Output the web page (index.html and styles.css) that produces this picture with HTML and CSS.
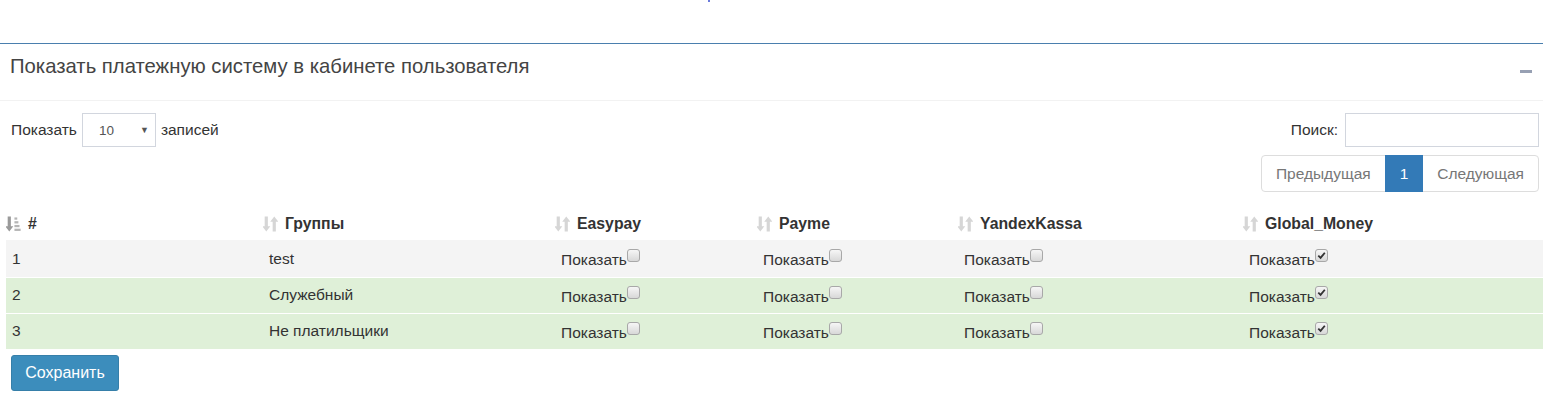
FILE: index.html
```html
<!DOCTYPE html>
<html lang="ru">
<head>
<meta charset="utf-8">
<title>Платежные системы</title>
<link rel="stylesheet" href="styles.css">
</head>
<body>
<div class="top"><span class="dot"></span></div>
<section class="box">
  <div class="box-header">
    <h3 class="box-title">Показать платежную систему в кабинете пользователя</h3>
    <span class="collapse-btn"></span>
  </div>
  <div class="box-body">
    <div class="controls">
      <div class="length">
        <span>Показать</span>
        <span class="select"><span class="select-val">10</span><span class="select-arrow">▼</span></span>
        <span>записей</span>
      </div>
      <div class="right-controls">
        <label class="search">Поиск: <span class="search-input"></span></label>
        <ul class="pagination">
          <li class="page disabled">Предыдущая</li>
          <li class="page active">1</li>
          <li class="page disabled">Следующая</li>
        </ul>
      </div>
    </div>
    <table class="grid">
      <colgroup>
        <col class="c1"><col class="c2"><col class="c3"><col class="c4"><col class="c5"><col class="c6">
      </colgroup>
      <thead>
        <tr>
          <th><svg class="sort" viewBox="0 0 16 18"><path class="dark" d="M1.8 1h3.4v10.5h2.6L3.5 17 -0.8 11.5h2.6z"/><rect class="bar" x="9" y="2" width="3" height="2.4"/><rect class="bar" x="9" y="6" width="4.2" height="2.4"/><rect class="bar" x="9" y="10" width="5.4" height="2.4"/><rect class="bar" x="9" y="14" width="6.6" height="2.4"/></svg><span>#</span></th>
          <th><svg class="sort" viewBox="0 0 16 18"><path class="light" d="M1.8 1h3.4v10.5h2.6L3.5 17 -0.8 11.5h2.6z"/><path class="light" d="M10.3 17h3.4V6.5h2.6L12 1 7.7 6.5h2.6z"/></svg><span>Группы</span></th>
          <th><svg class="sort" viewBox="0 0 16 18"><path class="light" d="M1.8 1h3.4v10.5h2.6L3.5 17 -0.8 11.5h2.6z"/><path class="light" d="M10.3 17h3.4V6.5h2.6L12 1 7.7 6.5h2.6z"/></svg><span>Easypay</span></th>
          <th><svg class="sort" viewBox="0 0 16 18"><path class="light" d="M1.8 1h3.4v10.5h2.6L3.5 17 -0.8 11.5h2.6z"/><path class="light" d="M10.3 17h3.4V6.5h2.6L12 1 7.7 6.5h2.6z"/></svg><span>Payme</span></th>
          <th><svg class="sort" viewBox="0 0 16 18"><path class="light" d="M1.8 1h3.4v10.5h2.6L3.5 17 -0.8 11.5h2.6z"/><path class="light" d="M10.3 17h3.4V6.5h2.6L12 1 7.7 6.5h2.6z"/></svg><span>YandexKassa</span></th>
          <th><svg class="sort" viewBox="0 0 16 18"><path class="light" d="M1.8 1h3.4v10.5h2.6L3.5 17 -0.8 11.5h2.6z"/><path class="light" d="M10.3 17h3.4V6.5h2.6L12 1 7.7 6.5h2.6z"/></svg><span>Global_Money</span></th>
        </tr>
      </thead>
      <tbody>
        <tr class="odd">
          <td>1</td><td>test</td>
          <td class="chk">Показать<span class="cb"></span></td>
          <td class="chk">Показать<span class="cb"></span></td>
          <td class="chk">Показать<span class="cb"></span></td>
          <td class="chk">Показать<span class="cb on"><svg viewBox="0 0 12 12"><path d="M2.5 6.2 5 8.6 9.6 3"/></svg></span></td>
        </tr>
        <tr class="success">
          <td>2</td><td>Служебный</td>
          <td class="chk">Показать<span class="cb"></span></td>
          <td class="chk">Показать<span class="cb"></span></td>
          <td class="chk">Показать<span class="cb"></span></td>
          <td class="chk">Показать<span class="cb on"><svg viewBox="0 0 12 12"><path d="M2.5 6.2 5 8.6 9.6 3"/></svg></span></td>
        </tr>
        <tr class="success">
          <td>3</td><td>Не платильщики</td>
          <td class="chk">Показать<span class="cb"></span></td>
          <td class="chk">Показать<span class="cb"></span></td>
          <td class="chk">Показать<span class="cb"></span></td>
          <td class="chk">Показать<span class="cb on"><svg viewBox="0 0 12 12"><path d="M2.5 6.2 5 8.6 9.6 3"/></svg></span></td>
        </tr>
      </tbody>
    </table>
    <button class="btn-save" type="button">Сохранить</button>
  </div>
</section>
</body>
</html>
```

FILE: styles.css
```css
* { box-sizing: border-box; }
html, body { margin: 0; padding: 0; background: #fff; }
body {
  font-family: "Liberation Sans", Arial, sans-serif;
  font-size: 15.5px;
  color: #333;
  width: 1543px;
  overflow: hidden;
}
.top { height: 43px; position: relative; }
.dot {
  position: absolute; left: 708px; top: 0;
  width: 2px; height: 2px; background: #3a4fd0; border-radius: 1px;
}
.box { border-top: 1px solid #4a7fae; }
.box-header {
  height: 57px;
  border-bottom: 1px solid #f2f2f2;
  display: flex; align-items: center; justify-content: space-between;
  padding: 0 11px 0 10px;
}
.box-title {
  margin: 0; font-weight: normal; font-size: 20.3px; color: #444;
  position: relative; top: -6px;
}
.collapse-btn {
  display: block; width: 12px; height: 3px; background: #97a0b3;
  position: relative; top: -1px;
}
.box-body { padding: 12px 4px 0 0; }
.controls { display: flex; justify-content: space-between; align-items: flex-start; }
.length { display: flex; align-items: center; gap: 5px; padding-left: 11px; }
.select {
  width: 74px; height: 34px; border: 1px solid #d2d6de;
  display: flex; align-items: center; justify-content: space-between;
  padding: 0 6px 0 16px; font-size: 13.5px; color: #555;
}
.select-arrow { font-size: 9px; color: #555; }
.right-controls { display: flex; flex-direction: column; align-items: flex-end; gap: 8px; }
.search { display: flex; align-items: center; gap: 7px; }
.search-input { display: block; width: 194px; height: 34px; border: 1px solid #d2d6de; }
.pagination {
  display: flex; list-style: none; margin: 0; padding: 0;
}
.page {
  height: 37px; line-height: 35px; padding: 0 14px;
  border: 1px solid #ddd; margin-left: -1px; color: #777; background: #fff;
}
.page:first-child { border-radius: 4px 0 0 4px; margin-left: 0; }
.page:last-child { border-radius: 0 4px 4px 0; }
.page.active { background: #337ab7; border-color: #337ab7; color: #fff; position: relative; }
.grid {
  margin: 11px 0 0 6px; width: 1537px; border-collapse: collapse; table-layout: fixed;
}
.c1 { width: 257px; } .c2 { width: 292px; } .c3 { width: 202px; }
.c4 { width: 201px; } .c5 { width: 285px; } .c6 { width: 300px; }
.grid th {
  text-align: left; font-weight: bold; font-size: 15.8px; height: 37px;
  padding: 5px 0 0 0; vertical-align: middle; white-space: nowrap;
}
.grid th span { vertical-align: middle; }
.sort { width: 15px; height: 18px; vertical-align: middle; margin-right: 7px; }
.sort .light { fill: #d6d6d6; }
.sort .dark { fill: #9a9a9a; }
.sort .bar { fill: #b5b5b5; }
.grid td { padding: 0 6px; vertical-align: middle; border-top: 1px solid #fff; }
.grid tr.odd td { height: 37px; background: #f4f4f4; border-top-color: #f4f4f4; }
.grid tr.success td { height: 36px; background: #dff0d8; }
.grid td.chk { padding-top: 1px; }
.cb {
  display: inline-block; width: 13px; height: 13px;
  border: 1px solid #a8a8a8; border-radius: 3px;
  background: linear-gradient(#f6f6f6, #d8d8d8);
  vertical-align: 3px; position: relative;
}
.cb svg { position: absolute; left: 0; top: 0; width: 11px; height: 11px; }
.cb svg path { fill: none; stroke: #333; stroke-width: 2; }
.btn-save {
  margin: 6px 0 0 11px; width: 108px; height: 36px;
  background: #3c8dbc; border: 1px solid #367fa9; border-radius: 3px;
  color: #fff; font-family: "Liberation Sans", Arial, sans-serif; font-size: 16px;
  padding: 0;
}
```
